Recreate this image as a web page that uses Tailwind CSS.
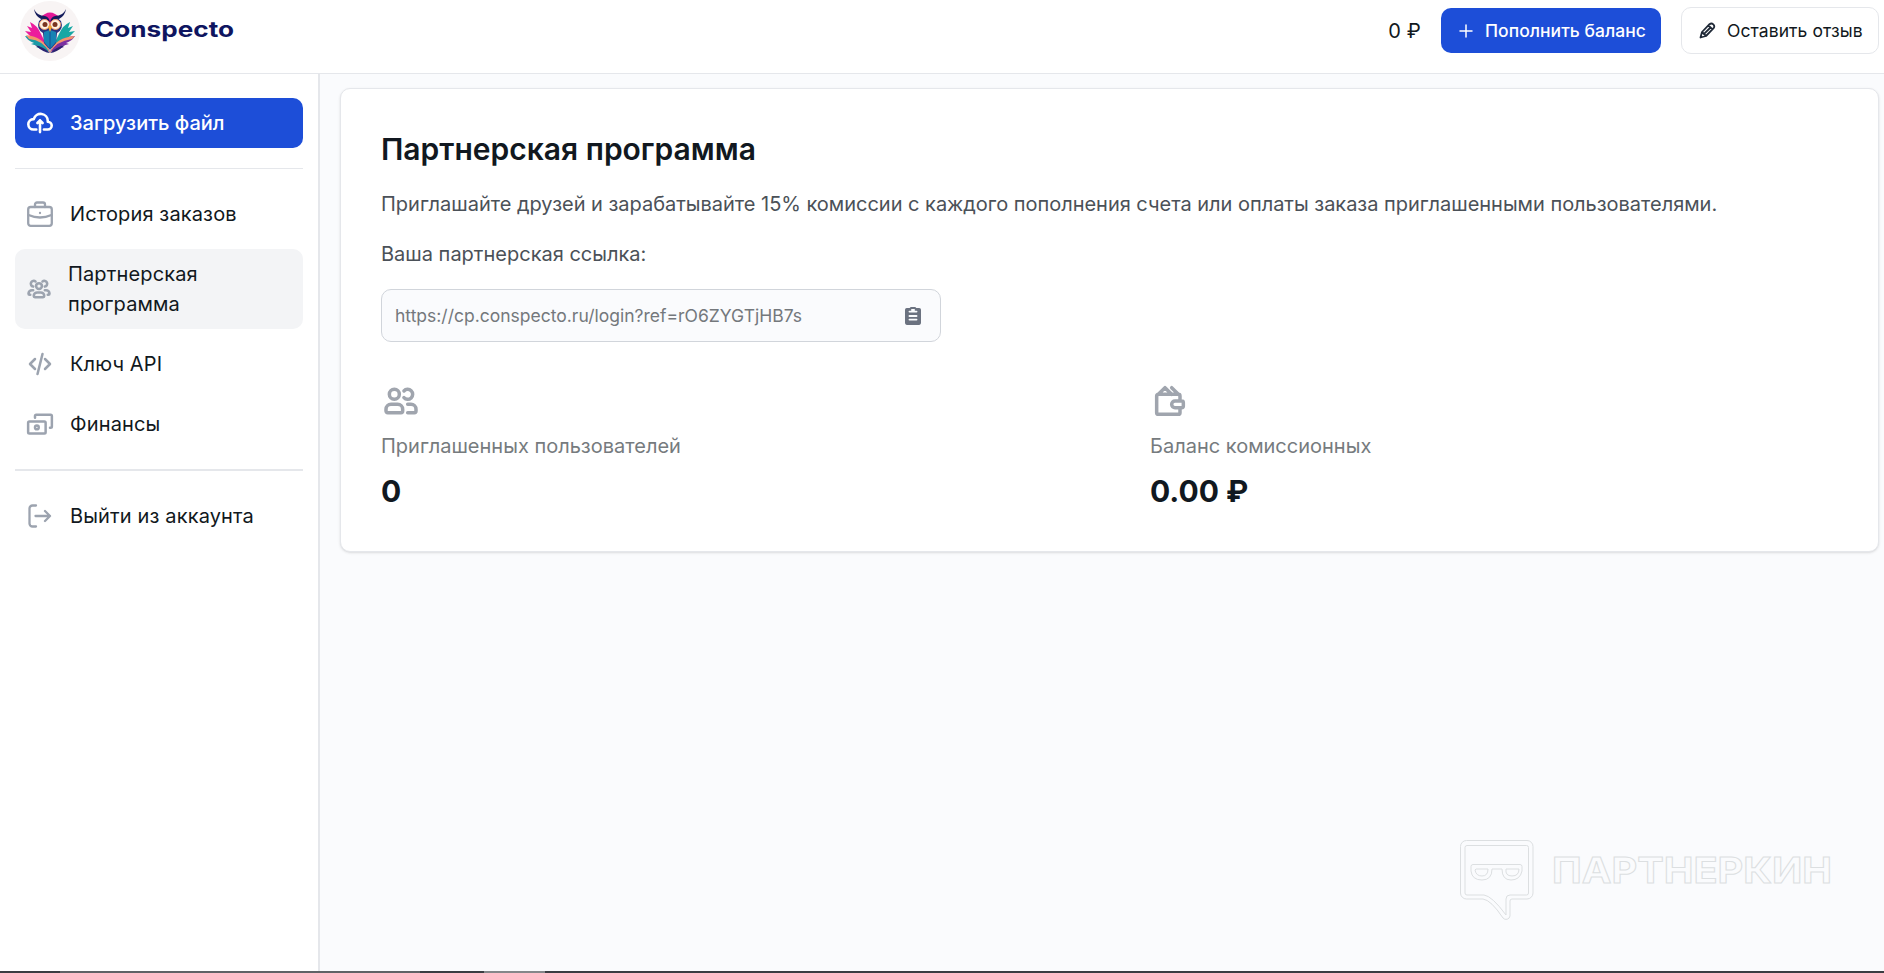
<!DOCTYPE html>
<html lang="ru">
<head>
<meta charset="utf-8">
<title>Conspecto</title>
<script src="https://cdn.jsdelivr.net/npm/@tailwindcss/browser@4"></script>
</head>
<body class="flex h-[973px] w-[1884px] flex-col overflow-hidden bg-white font-[Inter,sans-serif] text-[20px] leading-[30px] text-[#111820]">
<header class="flex h-[74px] shrink-0 items-start justify-between border-b border-[#e5e7eb] pr-[5px] pl-5">
  <div class="flex items-center pt-[1px]">
    <svg class="h-[60px] w-[60px]" viewBox="0 0 60 60">
      <circle cx="30" cy="30" r="30" fill="#f8f4f4"/>
      <path d="M10 21q7 3 11 12l9 18-7-6-8-5-8-2 5-1-7-7 6 1-4-6 5 2Z" fill="#ec1c9c"/>
      <path d="M50 21q-7 3-11 12l-9 18 7-6 8-5 8-2-5-1 7-7-6 1 4-6-5 2Z" fill="#17a7a4"/>
      <path d="M5 35q18 1 25 16q-9-3-14-5l2-1-7-2 3-1q-6-2-9-7Z" fill="#1a9aa6"/>
      <path d="M55 35q-18 1-25 16q9-3 14-5l-2-1 7-2-3-1q6-2 9-7Z" fill="#7b2fa0"/>
      <path d="M6 34q18 2 24 17q6-15 25-16l-3 3q-16 2-22 14q-7-13-21-14Z" fill="#f4946c"/>
      <path d="M30 52q-6-6-15-8 9 8 15 8 6 0 15-8-9 2-15 8Z" fill="#2a2270"/>
      <path d="M19 20q-3 8 4 12l1 10 6 7 6-7 1-10q7-4 4-12l-6-5H25Z" fill="#2b3280"/>
      <path d="M20 17q10-11 20 0l-5 0-5 7-5-7Z" fill="#e31897"/>
      <path d="M24 31l6-2 6 2v10l-6 7-6-7Z" fill="#1782b4"/>
      <path d="M30 30v17" stroke="#174f93" stroke-width="1"/>
      <path d="M14 8q3 7 11 7 4 1 5 6-4-4-9-3-6-3-7-10ZM46 8q-3 7-11 7-4 1-5 6 4-4 9-3 6-3 7-10Z" fill="#141c5c"/>
      <circle cx="24.500" cy="23.500" r="5" fill="#fff1e2" stroke="#f29a6a"/><circle cx="35.500" cy="23.500" r="5" fill="#fff1e2" stroke="#f29a6a"/>
      <circle cx="25" cy="23.500" r="2.500" fill="#7a3420"/><circle cx="35" cy="23.500" r="2.500" fill="#7a3420"/>
      <path d="M28 26l2-2 2 2-2 5Z" fill="#f5a533"/>
    </svg>
    <svg class="ml-[14px] h-[40px] w-[145px] -translate-y-[2px]" viewBox="0 0 145 40"><text x="1" y="28" font-family="Inter, sans-serif" font-weight="700" font-size="21.500" textLength="139" lengthAdjust="spacingAndGlyphs" fill="#0f1560">Conspecto</text></svg>
  </div>
  <div class="flex items-center pt-[7px]">
    <span class="mr-[20px] tracking-[0.2px]">0 ₽</span>
    <button class="mr-[20px] flex h-[45px] w-[220px] items-center rounded-[10px] bg-[#1d4ed8] pl-[18px] text-[17.500px] font-medium text-white">
      <svg class="mr-[12px] h-[14px] w-[14px]" viewBox="0 0 14 14" stroke="currentColor" stroke-width="1.500" stroke-linecap="round"><path d="M7 1v12M1 7h12"/></svg>
      <span class="whitespace-nowrap tracking-[0.04px]">Пополнить баланс</span>
    </button>
    <button class="flex h-[47px] w-[198px] items-center rounded-[10px] border border-[#e5e7eb] pl-[17px] text-[17.500px]">
      <svg class="mr-[11px] h-[17px] w-[17px]" viewBox="0 0 17 17" fill="none" stroke="#1f2937" stroke-width="1.800" stroke-linejoin="round"><path d="M1.500 15.500 3 10 10.500 2.200q2-1.500 3.800.2t.3 3.800L7 14ZM3 10l4 4M4.800 12.200 12 5M9.500 3.500l4 4"/></svg>
      <span class="whitespace-nowrap tracking-[0.08px]">Оставить отзыв</span>
    </button>
  </div>
</header>
<div class="flex min-h-0 flex-1">
  <aside class="flex w-[320px] shrink-0 flex-col border-r-2 border-[#e5e7eb] px-[15px] pt-6">
    <a class="flex h-[50px] w-[288px] items-center rounded-[10px] bg-[#1d4ed8] pl-3 font-medium text-white">
      <svg class="mr-[17px] h-[26px] w-[26px]" viewBox="0 0 20 16" fill="none" stroke="currentColor" stroke-width="2" stroke-linecap="round" stroke-linejoin="round"><path d="M13 13h3a3 3 0 0 0 0-6h-.025A5.560 5.560 0 0 0 16 6.500 5.500 5.500 0 0 0 5.207 5.021C5.137 5.017 5.071 5 5 5a4 4 0 0 0 0 8h2.167M10 15V6m0 0L8 8m2-2 2 2"/></svg>
      Загрузить файл
    </a>
    <hr class="mt-5 mb-5 w-[288px] border-[#e5e7eb]">
    <nav class="flex w-[288px] flex-col gap-[10px] tracking-[0.14px]">
      <a class="flex h-[50px] items-center pl-3">
        <svg class="mr-[17px] h-[26px] w-[26px]" viewBox="0 0 26 26" fill="none" stroke="#9ca3af" stroke-width="2.300" stroke-linejoin="round" stroke-linecap="round"><rect x="1.200" y="6" width="23.600" height="18.800" rx="2.500"/><path d="M8 6V3.500A2 2 0 0 1 10 1.500h6a2 2 0 0 1 2 2V6M1.500 14q11.500 5 23 0M13 12v.01"/></svg>
        История заказов
      </a>
      <a class="flex h-[80px] items-center rounded-[10px] bg-[#f3f4f6] pl-[10px]">
        <svg class="mr-[15px] h-[28px] w-[28px]" viewBox="0 0 24 24" fill="none" stroke="#9ca3af" stroke-width="2.200" stroke-linecap="round"><path d="M4.500 17H4a1 1 0 0 1-1-1 3 3 0 0 1 3-3h1m0-3.050A2.500 2.500 0 1 1 9 5.500M19.500 17h.5a1 1 0 0 0 1-1 3 3 0 0 0-3-3h-1m0-3.050a2.500 2.500 0 1 0-2-4.450m.5 13.500h-7a1 1 0 0 1-1-1 3 3 0 0 1 3-3h3a3 3 0 0 1 3 3 1 1 0 0 1-1 1Zm-1-9.500a2.500 2.500 0 1 1-5 0 2.500 2.500 0 0 1 5 0Z"/></svg>
        <span>Партнерская<br>программа</span>
      </a>
      <a class="flex h-[50px] items-center pl-[10px]">
        <svg class="mr-[15px] h-[30px] w-[30px]" viewBox="0 0 24 24" fill="none" stroke="#9ca3af" stroke-width="2" stroke-linecap="round" stroke-linejoin="round"><path d="m8 8-4 4 4 4m8 0 4-4-4-4m-2-4-4 16"/></svg>
        Ключ API
      </a>
      <a class="flex h-[50px] items-center pl-[10px]">
        <svg class="mr-[15px] h-[30px] w-[30px]" viewBox="0 0 24 24" fill="none" stroke="#9ca3af" stroke-width="2" stroke-linecap="round" stroke-linejoin="round"><path d="M8 7V5.500a1 1 0 0 1 1-1h11.500a1 1 0 0 1 1 1V14a1 1 0 0 1-1 1H20M2.500 18.500v-7.500a1 1 0 0 1 1-1h12a1 1 0 0 1 1 1v7.500a1 1 0 0 1-1 1h-12a1 1 0 0 1-1-1Zm8.500-3.750a1.500 1.500 0 1 1-3 0 1.500 1.500 0 0 1 3 0Z"/></svg>
        Финансы
      </a>
    </nav>
    <hr class="mt-5 mb-5 w-[288px] border-t-2 border-[#e5e7eb]">
    <a class="flex h-[50px] items-center pl-3 tracking-[0.14px]">
      <svg class="mr-[17px] h-[26px] w-[26px]" viewBox="0 0 26 26" fill="none" stroke="#9ca3af" stroke-width="2.300" stroke-linecap="round" stroke-linejoin="round"><path d="M9 2.500H5.500a3 3 0 0 0-3 3v15a3 3 0 0 0 3 3H9M8.500 13H23m0 0-5-5m5 5-5 5"/></svg>
      Выйти из аккаунта
    </a>
  </aside>
  <main class="flex-1 bg-[#fafbfd] pt-[14px] pr-[5px] pl-5">
    <section class="h-[464px] rounded-[10px] border border-[#e5e7eb] bg-white px-10 pt-[40px] shadow-sm">
      <h1 class="text-[30px] leading-[40px] font-semibold">Партнерская программа</h1>
      <p class="mt-[20px] tracking-[-0.02px] whitespace-nowrap text-[#4b5158]">Приглашайте друзей и зарабатывайте 15% комиссии с каждого пополнения счета или оплаты заказа приглашенными пользователями.</p>
      <p class="mt-[20px] text-[#4b5158]">Ваша партнерская ссылка:</p>
      <div class="mt-[20px] flex h-[53px] w-[560px] items-center justify-between rounded-[10px] border border-[#d1d5db] bg-[#fafbfd] pr-[19px] pl-[13px] text-[17.500px] text-[#74787c]">
        <span>https://cp.conspecto.ru/login?ref=rO6ZYGTjHB7s</span>
        <svg class="h-[18px] w-[16px]" viewBox="0 0 18 20" fill="#6b7280"><path d="M16 1h-3.278A1.992 1.992 0 0 0 11 0H7a1.993 1.993 0 0 0-1.722 1H2a2 2 0 0 0-2 2v15a2 2 0 0 0 2 2h14a2 2 0 0 0 2-2V3a2 2 0 0 0-2-2Zm-3 14H5a1 1 0 0 1 0-2h8a1 1 0 0 1 0 2Zm0-4H5a1 1 0 0 1 0-2h8a1 1 0 1 1 0 2Zm0-5H5a1 1 0 0 1 0-2h2V2h4v2h2a1 1 0 1 1 0 2Z"/></svg>
      </div>
      <dl class="mt-[39px] grid grid-cols-[769px_1fr]">
        <div>
          <svg class="h-10 w-10" viewBox="0 0 24 24" fill="none" stroke="#a0a5ae" stroke-width="2.100" stroke-linecap="round"><path d="M16 19h4a1 1 0 0 0 1-1v-1a3 3 0 0 0-3-3h-2m-2.236-4a3 3 0 1 0 0-4M3 18v-1a3 3 0 0 1 3-3h4a3 3 0 0 1 3 3v1a1 1 0 0 1-1 1H4a1 1 0 0 1-1-1Zm8-10a3 3 0 1 1-6 0 3 3 0 0 1 6 0Z"/></svg>
          <dt class="mt-[10px] text-[#767b7e]">Приглашенных пользователей</dt>
          <dd class="mt-[10px] text-[30px] leading-[40px] font-bold">0</dd>
        </div>
        <div>
          <svg class="h-10 w-10" viewBox="0 0 24 24" fill="none" stroke="#a0a5ae" stroke-width="2.100" stroke-linecap="round" stroke-linejoin="round"><path d="M17 8H5m12 0a1 1 0 0 1 1 1v2.600M17 8l-4-4M5 8a1 1 0 0 0-1 1v10a1 1 0 0 0 1 1h12a1 1 0 0 0 1-1v-2.600M5 8l4-4 4 4m6 4h-4a2 2 0 1 0 0 4h4a1 1 0 0 0 1-1v-2a1 1 0 0 0-1-1Z"/></svg>
          <dt class="mt-[10px] text-[#767b7e]">Баланс комиссионных</dt>
          <dd class="mt-[10px] text-[30px] leading-[40px] font-bold">0.00 ₽</dd>
        </div>
      </dl>
    </section>
  </main>
</div>
<svg class="absolute top-[838px] left-[1458px] h-[84px] w-[380px]" viewBox="0 0 380 84" fill="none" stroke="#dcdfe1" stroke-width="1">
  <path d="M8.500 2.500H69a6 6 0 0 1 6 6V55a6 6 0 0 1-6 6H54a2 2 0 0 0-2 2V78a4 4 0 0 1-7 2Q33 62 25 61H8.500a6 6 0 0 1-6-6V8.500a6 6 0 0 1 6-6Z"/>
  <path d="M9 7.500H68.500a2 2 0 0 1 2 2V55a2 2 0 0 1-2 2H52a4 4 0 0 0-4 4V77Q34 58 26 57H9a2 2 0 0 1-2-2V9.500a2 2 0 0 1 2-2Z"/>
  <path d="M15 26.500H62a2 2 0 0 1 2 2V33q-2 9-11 9T44 31H34q0 11-10 11T13 33V28.500a2 2 0 0 1 2-2ZM18 31H30q0 7-6 7T17 32ZM48 31H61q0 7-7 7T48 31Z"/>
  <text x="94" y="45" font-family="Inter, sans-serif" font-weight="700" font-size="36" textLength="280" lengthAdjust="spacingAndGlyphs">ПАРТНЕРКИН</text>
</svg>
<div class="flex h-[2px] shrink-0 bg-[#3b3d42]"><i class="ml-[60px] h-full w-[360px] bg-[#606266]"></i><i class="ml-[64px] h-full w-[61px] bg-[#85878a]"></i></div>
</body>
</html>
